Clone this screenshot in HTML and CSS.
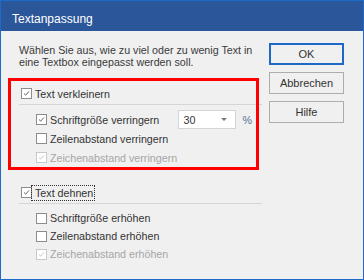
FILE: index.html
```html
<!DOCTYPE html>
<html lang="de">
<head>
  <meta charset="UTF-8" />
  <title>Textanpassung</title>
  <link rel="stylesheet" href="styles.css">
</head>
<body>
  <div class="dialog">
    <div class="titlebar">Textanpassung</div>

    <div class="content">
      <div class="main">
        <p class="intro">
          Wählen Sie aus, wie zu viel oder zu wenig Text in<br>
          eine Textbox eingepasst werden soll.
        </p>

        <div class="group">
          <div class="row head">
            <span class="box"><svg viewBox="0 0 11 11"><path d="M2.5 5.5 L4.5 7.5 L8.5 3"/></svg></span>
            <span class="label">Text verkleinern</span>
          </div>
          <div class="sep"></div>
          <div class="sub">
            <div class="row tall">
              <span class="box"><svg viewBox="0 0 11 11"><path d="M2.5 5.5 L4.5 7.5 L8.5 3"/></svg></span>
              <span class="label grow">Schriftgröße verringern</span>
              <div class="combo"><span>30</span><span class="arrow"></span></div>
              <span class="unit">%</span>
            </div>
            <div class="row tall">
              <span class="box"></span>
              <span class="label">Zeilenabstand verringern</span>
            </div>
            <div class="row tall disabled">
              <span class="box"><svg viewBox="0 0 11 11"><path d="M2.5 5.5 L4.5 7.5 L8.5 3"/></svg></span>
              <span class="label">Zeichenabstand verringern</span>
            </div>
          </div>
        </div>

        <div class="group second">
          <div class="row head">
            <span class="box"><svg viewBox="0 0 11 11"><path d="M2.5 5.5 L4.5 7.5 L8.5 3"/></svg></span>
            <span class="label focus">Text dehnen</span>
          </div>
          <div class="sep"></div>
          <div class="sub">
            <div class="row">
              <span class="box"></span>
              <span class="label">Schriftgröße erhöhen</span>
            </div>
            <div class="row">
              <span class="box"></span>
              <span class="label">Zeilenabstand erhöhen</span>
            </div>
            <div class="row disabled">
              <span class="box"><svg viewBox="0 0 11 11"><path d="M2.5 5.5 L4.5 7.5 L8.5 3"/></svg></span>
              <span class="label">Zeichenabstand erhöhen</span>
            </div>
          </div>
        </div>
      </div>

      <div class="buttons">
        <button class="btn default">OK</button>
        <button class="btn">Abbrechen</button>
        <button class="btn">Hilfe</button>
      </div>
    </div>

    <div class="highlight"></div>
  </div>
</body>
</html>
```

FILE: styles.css
```css
* {
  box-sizing: border-box;
  margin: 0;
  padding: 0;
}

body {
  width: 364px;
  height: 280px;
  font-family: 'Liberation Sans', Arial, sans-serif;
  font-size: 10.7px;
  color: #333;
  background: #f0f0f0;
}

.dialog {
  position: relative;
  width: 364px;
  height: 280px;
  border: 1px solid #1d6bc8;
  background: #f0f0f0;
}

.titlebar {
  height: 30px;
  background: #2b579a;
  color: #fff;
  font-size: 12px;
  line-height: 14px;
  padding: 11px 0 0 11px;
}

.content {
  display: flex;
  padding: 12px 0 0 18px;
}

.main {
  width: 243px;
}

.intro {
  margin-top: 1px;
  line-height: 12px;
  color: #3a3a3a;
}

.group {
  margin-top: 16px;
}

.group.second {
  margin-top: 16px;
}

.row {
  display: flex;
  align-items: center;
  height: 18px;
}

.row.tall {
  height: 19px;
}

.row.head {
  height: 19px;
  padding-left: 2px;
}

.box {
  width: 11px;
  height: 11px;
  border: 1px solid #8c8c8c;
  background: #fff;
  margin-right: 3px;
  flex-shrink: 0;
}

.box svg {
  display: block;
  width: 9px;
  height: 9px;
  fill: none;
  stroke: #5e5e5e;
  stroke-width: 1.2;
}

.label {
  white-space: nowrap;
}

.label.grow {
  flex: 1;
}

.label.focus {
  outline: 1px dotted #333;
  padding: 1px 1px 1px 3px;
  margin-left: -3px;
}

.disabled .label {
  color: #a6a6a6;
}

.disabled .box {
  border-color: #c8c8c8;
}

.disabled .box svg {
  stroke: #c4c4c4;
}

.sep {
  height: 1px;
  background: #d5d5d5;
  margin-top: 1px;
}

.sub {
  padding-left: 17px;
  margin-top: 5px;
}

.combo {
  width: 58px;
  height: 19px;
  border: 1px solid #d4d4d4;
  background: #fff;
  display: flex;
  align-items: center;
  justify-content: space-between;
  padding: 0 8px 0 4px;
}

.arrow {
  width: 0;
  height: 0;
  border-left: 3px solid transparent;
  border-right: 3px solid transparent;
  border-top: 3px solid #7a7a7a;
}

.unit {
  margin: 0 10px 0 6px;
  color: #56739b;
}

.buttons {
  display: flex;
  flex-direction: column;
  gap: 7px;
  margin-left: 7px;
}

.btn {
  width: 75px;
  height: 22px;
  border: 1px solid #adadad;
  background: #f0f0f0;
  font-family: inherit;
  font-size: 11px;
  color: #333;
}

.btn.default {
  border: 2px solid #1e68c6;
}

.highlight {
  position: absolute;
  left: 7px;
  top: 77px;
  width: 251px;
  height: 92px;
  border: 3px solid #ff0000;
}
```
